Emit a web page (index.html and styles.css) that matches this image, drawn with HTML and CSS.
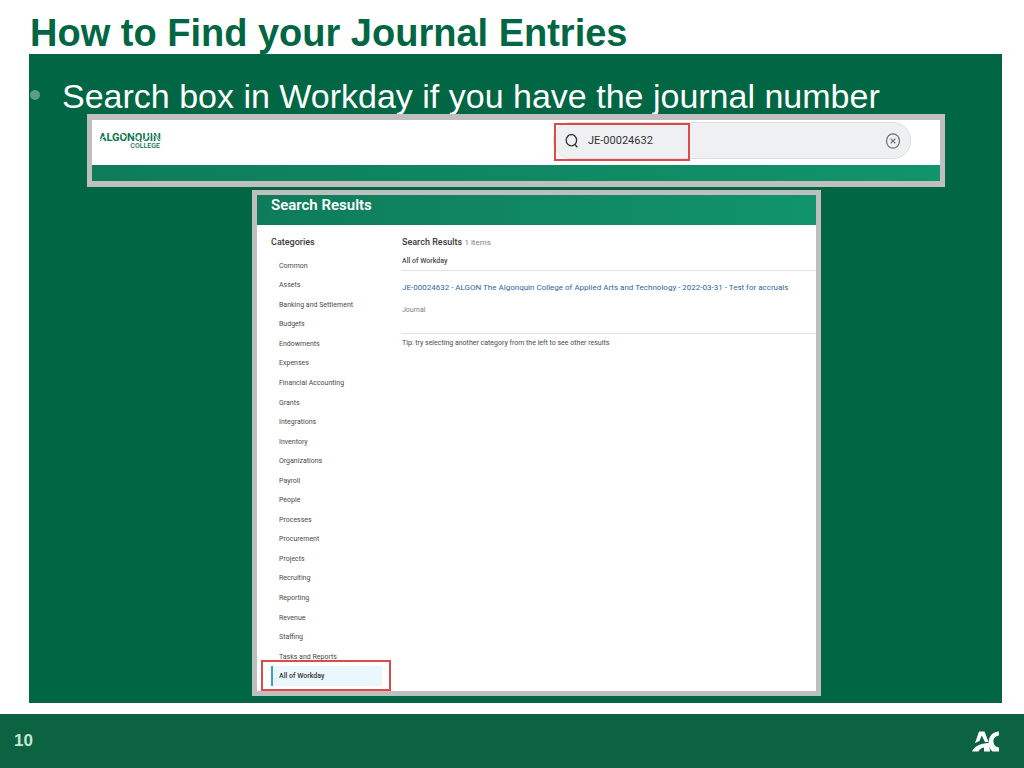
FILE: index.html
```html
<!DOCTYPE html>
<html lang="en">
<head>
    <meta charset="UTF-8">
    <meta name="viewport" content="width=device-width, initial-scale=1.0">
    <title>How to Find your Journal Entries</title>
    <link rel="stylesheet" href="styles.css">
</head>
<body>
    <div class="slide">
        <h1 class="slide-title">How to Find your Journal Entries</h1>

        <main class="content">
            <ul class="bullets">
                <li>Search box in Workday if you have the journal number</li>
            </ul>

            <!-- Workday top bar -->
            <section class="frame top-bar">
                <div class="top-bar-row">
                    <svg class="college-logo" viewBox="0 0 62 20" role="img" aria-label="Algonquin College">
                        <text class="logo-name" x="-1" y="12">ALGONQUIN</text>
                        <text class="logo-sub" x="60" y="19" text-anchor="end">COLLEGE</text>
                        <path class="logo-cut" d="M0 11 L7 6 M20 4 L26 8 M31 4 L40 12 M44 11 L51 5 M52 4 L60 11"/>
                    </svg>
                    <form class="search">
                        <svg class="search-icon" viewBox="0 0 14 14" aria-hidden="true">
                            <ellipse cx="6.4" cy="6.2" rx="5.2" ry="5.6"/>
                            <path d="M9.6 10.2 L12.4 13.2"/>
                        </svg>
                        <input type="text" aria-label="Search" value="JE-00024632">
                        <button type="button" class="clear-btn" aria-label="Clear search">
                            <svg viewBox="0 0 16 16" aria-hidden="true">
                                <ellipse cx="8" cy="8" rx="6.5" ry="7.2"/>
                                <path d="M5.6 5.6 L10.4 10.4 M10.4 5.6 L5.6 10.4"/>
                            </svg>
                        </button>
                        <span class="highlight highlight-search"></span>
                    </form>
                </div>
                <div class="top-bar-strip"></div>
            </section>

            <!-- Search results -->
            <section class="frame results">
                <h2 class="results-banner">Search Results</h2>
                <div class="results-body">
                    <nav class="categories">
                        <h3>Categories</h3>
                        <ul>
                            <li><a href="#">Common</a></li>
                            <li><a href="#">Assets</a></li>
                            <li><a href="#">Banking and Settlement</a></li>
                            <li><a href="#">Budgets</a></li>
                            <li><a href="#">Endowments</a></li>
                            <li><a href="#">Expenses</a></li>
                            <li><a href="#">Financial Accounting</a></li>
                            <li><a href="#">Grants</a></li>
                            <li><a href="#">Integrations</a></li>
                            <li><a href="#">Inventory</a></li>
                            <li><a href="#">Organizations</a></li>
                            <li><a href="#">Payroll</a></li>
                            <li><a href="#">People</a></li>
                            <li><a href="#">Processes</a></li>
                            <li><a href="#">Procurement</a></li>
                            <li><a href="#">Projects</a></li>
                            <li><a href="#">Recruiting</a></li>
                            <li><a href="#">Reporting</a></li>
                            <li><a href="#">Revenue</a></li>
                            <li><a href="#">Staffing</a></li>
                            <li><a href="#">Tasks and Reports</a></li>
                            <li class="active">
                                <a href="#">All of Workday</a>
                                <span class="highlight highlight-category"></span>
                            </li>
                        </ul>
                    </nav>
                    <div class="result-list">
                        <h3>Search Results <span class="count">1 items</span></h3>
                        <h4>All of Workday</h4>
                        <div class="result">
                            <a href="#">JE-00024632 - ALGON The Algonquin College of Applied Arts and Technology - 2022-03-31 - Test for accruals</a>
                            <p>Journal</p>
                        </div>
                        <p class="tip">Tip: try selecting another category from the left to see other results</p>
                    </div>
                </div>
            </section>
        </main>

        <footer class="footer">
            <span class="page-number">10</span>
            <svg class="ac-logo" viewBox="0 0 27 21" role="img" aria-label="AC">
                <path d="M7 0.5 H12.5 L16.5 11 H13 L9.7 4.5 L7.5 10 L3 12 Z"/>
                <path d="M0 20.5 C2 15.5 8 12.5 17 12 L18 20.5 H12 V16.5 C9 17 7.5 18.5 6.5 20.5 Z"/>
                <path d="M27 0.5 V4.5 C22.5 5 21 8.5 21.5 11.5 C22 14.5 24 16 27 16.5 V20.5 H20.5 C17.5 18 16 14 16.8 9.5 C17.8 4 21.5 0.5 27 0.5 Z"/>
            </svg>
        </footer>
    </div>
</body>
</html>
```

FILE: styles.css
```css
* {
    margin: 0;
    padding: 0;
    box-sizing: border-box;
}

body {
    font-family: "Liberation Sans", Arial, sans-serif;
    background: #fff;
}

ul {
    list-style: none;
}

a {
    color: inherit;
    text-decoration: none;
}

.slide {
    display: flex;
    flex-direction: column;
    min-height: 100vh;
}

.slide-title {
    padding: 13px 30px 0;
    font-size: 38px;
    line-height: 41px;
    color: #006643;
}

.content {
    flex: 1;
    margin: 0 22px 11px 29px;
    padding: 24px 0 7px;
    background: #006643;
}

/* Bullet text */
.bullets li {
    display: flex;
    align-items: center;
    gap: 22px;
    padding-left: 1px;
    font-size: 34px;
    line-height: 36px;
    color: #fff;
}

.bullets li::before {
    content: "";
    width: 10px;
    height: 10px;
    margin-bottom: 2px;
    border-radius: 50%;
    background: #5a9e83;
}

/* Pasted screens */
.frame {
    position: relative;
    border: 5px solid #bfbfbf;
    background: #fff;
    font-family: Roboto, sans-serif;
}

.highlight {
    position: absolute;
    border: 2px solid #dc4a4c;
    pointer-events: none;
}

.top-bar {
    margin: 0 57px 3px 58px;
    border-width: 6px 5px;
}

.top-bar-row {
    display: flex;
    align-items: flex-start;
    justify-content: space-between;
    height: 45px;
    padding: 2px 29px 0 8px;
}

.top-bar-strip {
    height: 16px;
    background: linear-gradient(90deg, #0e7c5a, #11946b);
}

.college-logo {
    width: 62px;
    height: 20px;
    margin-top: 7px;
    fill: #10754f;
}

.logo-name {
    font-size: 11px;
    font-weight: 700;
}

.logo-sub {
    font-size: 7px;
    font-weight: 500;
}

.logo-cut {
    fill: none;
    stroke: #fff;
    stroke-width: 1;
}

.search {
    position: relative;
    display: flex;
    align-items: center;
    width: 358px;
    height: 37px;
    padding: 0 9px 0 11px;
    border: 1px solid #dcdfe0;
    border-radius: 18px;
    background: #eff0f2;
}

.search-icon {
    width: 14px;
    height: 14px;
    fill: none;
    stroke: #333;
    stroke-width: 1.3;
}

.search input {
    flex: 1;
    min-width: 0;
    margin-left: 9px;
    border: none;
    outline: none;
    background: none;
    font-family: inherit;
    font-size: 11px;
    color: #333;
}

.clear-btn {
    width: 16px;
    height: 16px;
    border: none;
    background: none;
    cursor: pointer;
}

.clear-btn svg {
    display: block;
    fill: none;
    stroke: #6b7075;
    stroke-width: 1.2;
}

.highlight-search {
    top: 0;
    left: 0;
    width: 136px;
    height: 38px;
}

.results {
    margin: 0 181px 0 223px;
}

.results-banner {
    height: 30px;
    padding-left: 14px;
    font-size: 15px;
    font-weight: 600;
    line-height: 20px;
    color: #fff;
    background: linear-gradient(90deg, #0e7c5a, #11946b);
}

.results-body {
    display: flex;
    padding: 11px 0 5px 14px;
    color: #4a4a4a;
}

.results-body h3 {
    font-size: 9px;
    font-weight: 500;
    line-height: 12px;
    color: #3a3a3a;
}

.categories {
    width: 131px;
    padding-right: 20px;
    font-size: 7px;
}

/* Rows share the column height evenly */
.categories ul {
    display: grid;
    grid-auto-rows: 1fr;
    height: 430px;
    margin-top: 8px;
}

.categories li {
    display: flex;
    align-items: center;
    padding-left: 8px;
}

.categories .active {
    position: relative;
    padding-left: 6px;
    border-left: 2px solid #3ba3cf;
    background: #eaf8fd;
    font-weight: 500;
    color: #333;
}

.highlight-category {
    top: -6px;
    left: -12px;
    width: 130px;
    height: 31px;
}

.result-list {
    flex: 1;
    min-width: 0;
}

.result-list .count {
    font-size: 8px;
    font-weight: 400;
    color: #808080;
}

.result-list h4 {
    padding: 7px 0 3px;
    border-bottom: 1px solid #e2e2e2;
    font-size: 7px;
    font-weight: 500;
    line-height: 11px;
}

.result {
    height: 63px;
    padding-top: 11px;
    border-bottom: 1px solid #e2e2e2;
    font-size: 8px;
    line-height: 12px;
}

.result a {
    color: #2f66a0;
    white-space: nowrap;
}

.result p {
    margin-top: 10px;
    font-size: 7px;
    color: #808080;
}

.tip {
    margin-top: 4px;
    font-size: 7px;
    line-height: 11px;
}

.footer {
    display: flex;
    align-items: center;
    justify-content: space-between;
    height: 54px;
    padding: 0 25px 0 14px;
    background: #0c6342;
}

.page-number {
    font-size: 17px;
    font-weight: 700;
    color: #c4e6d3;
}

.ac-logo {
    width: 27px;
    height: 21px;
    fill: #fff;
}
```
